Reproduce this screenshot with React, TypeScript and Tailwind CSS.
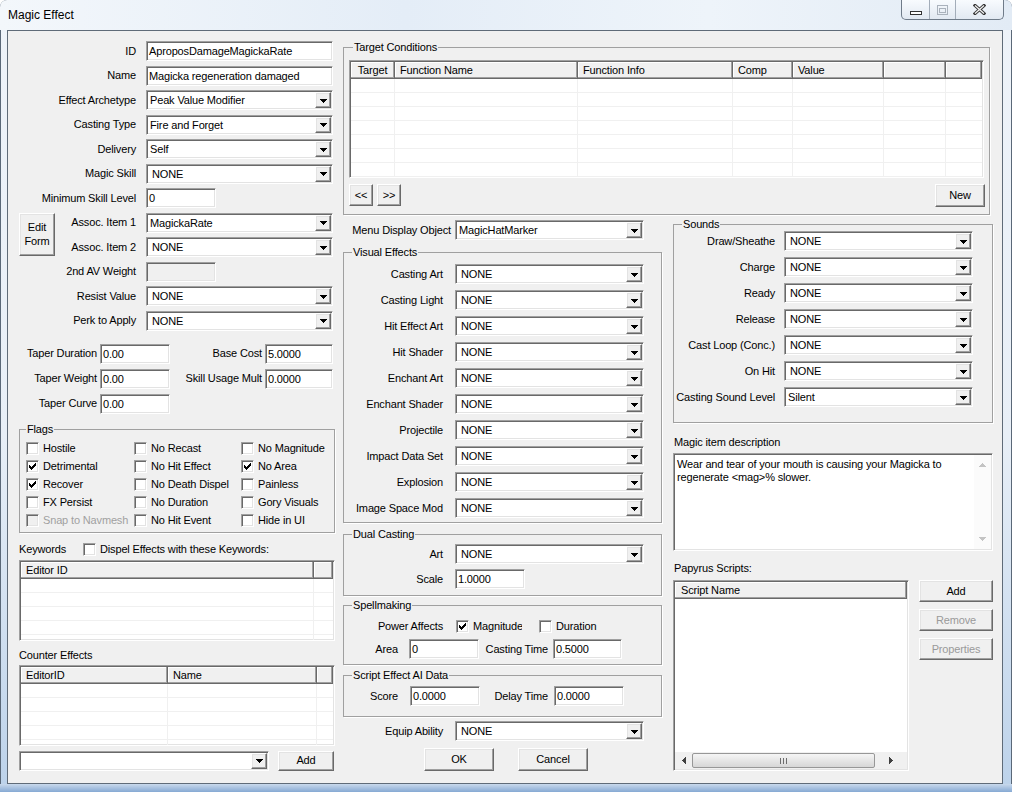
import React from "react";

const sunken =
  "border border-t-[#a0a0a0] border-l-[#a0a0a0] border-r-white border-b-white shadow-[inset_1px_1px_0_#696969,inset_-1px_-1px_0_#e3e3e3]";
const raised =
  "border border-t-white border-l-white border-r-[#696969] border-b-[#696969] shadow-[inset_-1px_-1px_0_#a0a0a0,inset_1px_1px_0_#e3e3e3]";

const Arrow = ({ color = "#000" }: { color?: string }) => (
  <svg width="7" height="4" viewBox="0 0 7 4" shapeRendering="crispEdges">
    <path d="M0 0h7v1H0zM1 1h5v1H1zM2 2h3v1H2zM3 3h1v1H3z" fill={color} />
  </svg>
);

const Combo = ({ className = "", value = "NONE" }: { className?: string; value?: string }) => (
  <div className={`${sunken} h-[20px] bg-white flex items-center shrink-0 ${className}`}>
    <span className={`flex-1 truncate leading-[16px] ${value === "NONE" ? "pl-[5px]" : "pl-[3px]"}`}>{value}</span>
    <div className={`${raised} bg-[#f0f0f0] w-[16px] h-[16px] mr-[1px] flex items-center justify-center pt-[1px]`}>
      <Arrow />
    </div>
  </div>
);

const Edit = ({ className = "", value = "", disabled = false }: { className?: string; value?: string; disabled?: boolean }) => (
  <div
    className={`${sunken} h-[20px] ${disabled ? "bg-[#f0f0f0]" : "bg-white"} pl-[2px] leading-[18px] truncate shrink-0 ${className}`}
  >
    {value}
  </div>
);

const Btn = ({ className = "", children, disabled = false }: { className?: string; children: React.ReactNode; disabled?: boolean }) => (
  <div
    className={`${raised} bg-[#f0f0f0] flex items-center justify-center text-center shrink-0 ${disabled ? "text-[#9a9a9a]" : ""} ${className}`}
  >
    {children}
  </div>
);

const Check = ({ label, checked = false, disabled = false, className = "" }: { label: string; checked?: boolean; disabled?: boolean; className?: string }) => (
  <div className={`flex items-center shrink-0 ${className}`}>
    <div className={`${sunken} w-[13px] h-[13px] ${disabled ? "bg-[#f0f0f0]" : "bg-white"} flex items-center justify-center shrink-0`}>
      {checked && (
        <svg width="7" height="7" viewBox="0 0 7 7" shapeRendering="crispEdges">
          <path
            d="M6 0h1v1H6zM5 1h2v1H5zM0 2h1v1H0zM4 2h3v1H4zM0 3h2v1H0zM3 3h3v1H3zM0 4h5v1H0zM1 5h3v1H1zM2 6h1v1H2z"
            fill="#000"
          />
        </svg>
      )}
    </div>
    <span className={`ml-[4px] whitespace-nowrap ${disabled ? "text-[#a0a0a0]" : ""}`}>{label}</span>
  </div>
);

const Group = ({ title, className = "", legend = "ml-[8px]", children }: { title: string; className?: string; legend?: string; children: React.ReactNode }) => (
  <fieldset className={`border border-[#a0a0a0] shadow-[1px_1px_0_#fff] min-w-0 shrink-0 ${className}`}>
    <legend className={`${legend} px-[1px] leading-[13px]`}>{title}</legend>
    {children}
  </fieldset>
);

const Row = ({ label, lw, children, className = "" }: { label: string; lw: string; children: React.ReactNode; className?: string }) => (
  <div className={`flex items-center h-[20px] shrink-0 ${className}`}>
    <span className={`${lw} text-right whitespace-nowrap shrink-0`}>{label}</span>
    {children}
  </div>
);

const HeaderCell = ({ label, className = "", center = false }: { label: string; className?: string; center?: boolean }) => (
  <div
    className={`h-[17px] shrink-0 border-r border-b border-r-[#696969] border-b-[#696969] shadow-[inset_-1px_-1px_0_#a0a0a0,inset_1px_1px_0_#fff] leading-[16px] truncate ${center ? "text-center" : "pl-[5px]"} ${className}`}
  >
    {label}
  </div>
);

type Col = { label: string; w: string; center?: boolean };

const ListView = ({ className, cols, rows }: { className: string; cols: Col[]; rows: number }) => (
  <div className={`${sunken} bg-white p-[1px] overflow-hidden flex flex-col shrink-0 ${className}`}>
    <div className="flex bg-[#f0f0f0] shrink-0">
      {cols.map((c, i) => (
        <HeaderCell key={i} label={c.label} className={c.w} center={c.center} />
      ))}
      <HeaderCell label="" className="flex-1" />
    </div>
    {Array.from({ length: rows }, (_, r) => (
      <div key={r} className="flex h-[14px] shrink-0 border-b border-[#f0f0f0]">
        {cols.map((c, i) => (
          <div key={i} className={`${c.w} shrink-0 border-r border-[#f0f0f0]`} />
        ))}
        <div className="flex-1" />
      </div>
    ))}
  </div>
);

const CaptionButtons = () => (
  <div className="mr-[8px] flex h-[20px] rounded-b-[5px] border border-t-0 border-[#6f7b89] bg-[linear-gradient(180deg,#f8fbfe,#e2e9f2)] overflow-hidden">
    <div className="w-[28px] flex items-start justify-center pt-[11px] border-r border-[#a3adb9]">
      <svg width="12" height="4" viewBox="0 0 12 4">
        <rect x="0.5" y="0.5" width="11" height="3" fill="#fff" stroke="#333" />
      </svg>
    </div>
    <div className="w-[26px] flex items-center justify-center border-r border-[#a3adb9]">
      <svg width="11" height="10" viewBox="0 0 11 10">
        <rect x="0.5" y="0.5" width="10" height="9" fill="none" stroke="#aab2bc" />
        <rect x="2.5" y="3.5" width="6" height="4" fill="none" stroke="#aab2bc" />
      </svg>
    </div>
    <div className="w-[47px] flex items-center justify-center">
      <svg width="13" height="11" viewBox="0 0 13 11">
        <path d="M2 1.5l9 8M11 1.5l-9 8" stroke="#3a3a3a" strokeWidth="3.2" strokeLinecap="square" />
        <path d="M2 1.5l9 8M11 1.5l-9 8" stroke="#f4f4f4" strokeWidth="1.2" />
      </svg>
    </div>
  </div>
);

const LeftColumn = () => (
  <div className="ml-[11px] mt-[10px] w-[316px] flex flex-col shrink-0">
    <div className="flex flex-col gap-[4.5px]">
      <Row label="ID" lw="w-[117px] mr-[10px]">
        <Edit className="w-[187px]" value="AproposDamageMagickaRate" />
      </Row>
      <Row label="Name" lw="w-[117px] mr-[10px]">
        <Edit className="w-[187px]" value="Magicka regeneration damaged" />
      </Row>
      <Row label="Effect Archetype" lw="w-[117px] mr-[10px]">
        <Combo className="w-[187px]" value="Peak Value Modifier" />
      </Row>
      <Row label="Casting Type" lw="w-[117px] mr-[10px]">
        <Combo className="w-[187px]" value="Fire and Forget" />
      </Row>
      <Row label="Delivery" lw="w-[117px] mr-[10px]">
        <Combo className="w-[187px]" value="Self" />
      </Row>
      <Row label="Magic Skill" lw="w-[117px] mr-[10px]">
        <Combo className="w-[187px]" />
      </Row>
      <Row label="Minimum Skill Level" lw="w-[117px] mr-[10px]">
        <Edit className="w-[70px]" value="0" />
      </Row>
      <div className="flex">
        <Btn className="w-[36px] h-[43px] leading-[14px]">
          Edit
          <br />
          Form
        </Btn>
        <div className="flex flex-col gap-[4.5px]">
          <Row label="Assoc. Item 1" lw="w-[81px] mr-[10px]">
            <Combo className="w-[187px]" value="MagickaRate" />
          </Row>
          <Row label="Assoc. Item 2" lw="w-[81px] mr-[10px]">
            <Combo className="w-[187px]" />
          </Row>
        </div>
      </div>
      <Row label="2nd AV Weight" lw="w-[117px] mr-[10px]">
        <Edit className="w-[70px]" disabled />
      </Row>
      <Row label="Resist Value" lw="w-[117px] mr-[10px]">
        <Combo className="w-[187px]" />
      </Row>
      <Row label="Perk to Apply" lw="w-[117px] mr-[10px]">
        <Combo className="w-[187px]" />
      </Row>
    </div>

    <div className="mt-[13px] flex flex-col gap-[5px]">
      <div className="flex items-center h-[20px]">
        <span className="w-[78px] text-right mr-[3px] whitespace-nowrap">Taper Duration</span>
        <Edit className="w-[70px]" value="0.00" />
        <span className="w-[92px] text-right mr-[3px] whitespace-nowrap">Base Cost</span>
        <Edit className="w-[68px]" value="5.0000" />
      </div>
      <div className="flex items-center h-[20px]">
        <span className="w-[78px] text-right mr-[3px] whitespace-nowrap">Taper Weight</span>
        <Edit className="w-[70px]" value="0.00" />
        <span className="w-[92px] text-right mr-[3px] whitespace-nowrap">Skill Usage Mult</span>
        <Edit className="w-[68px]" value="0.0000" />
      </div>
      <div className="flex items-center h-[20px]">
        <span className="w-[78px] text-right mr-[3px] whitespace-nowrap">Taper Curve</span>
        <Edit className="w-[70px]" value="0.00" />
      </div>
    </div>

    <Group title="Flags" className="mt-[9px] h-[110px] pl-[6px] pt-[4px]" legend="ml-0">
      <div className="grid grid-cols-[108px_107px_1fr] auto-rows-[18px] items-center">
        <Check label="Hostile" />
        <Check label="No Recast" />
        <Check label="No Magnitude" className="w-[84px] overflow-hidden" />
        <Check label="Detrimental" checked />
        <Check label="No Hit Effect" />
        <Check label="No Area" checked />
        <Check label="Recover" checked />
        <Check label="No Death Dispel" />
        <Check label="Painless" />
        <Check label="FX Persist" />
        <Check label="No Duration" />
        <Check label="Gory Visuals" />
        <Check label="Snap to Navmesh" disabled />
        <Check label="No Hit Event" />
        <Check label="Hide in UI" />
      </div>
    </Group>

    <div className="mt-[10px] flex items-center h-[14px]">
      <span className="w-[64px] shrink-0">Keywords</span>
      <Check label="Dispel Effects with these Keywords:" />
    </div>
    <ListView className="mt-[3px] w-[316px] h-[81px]" cols={[{ label: "Editor ID", w: "w-[293px]" }]} rows={5} />

    <div className="mt-[8px] h-[14px]">Counter Effects</div>
    <ListView
      className="mt-[2px] w-[316px] h-[81px]"
      cols={[
        { label: "EditorID", w: "w-[147px]" },
        { label: "Name", w: "w-[149px]" },
      ]}
      rows={5}
    />
    <div className="mt-[5px] flex items-center">
      <Combo className="w-[250px]" value="" />
      <Btn className="ml-[9px] w-[56px] h-[20px]">Add</Btn>
    </div>
  </div>
);

const MiddleColumn = () => (
  <div className="w-[319px] flex flex-col shrink-0">
    <div className="mt-[5px] flex items-center h-[20px]">
      <span className="w-[108px] text-right mr-[4px] whitespace-nowrap">Menu Display Object</span>
      <Combo className="w-[189px]" value="MagicHatMarker" />
    </div>

    <Group title="Visual Effects" className="mt-[6px] h-[277px] pt-[5px]">
      <div className="flex flex-col gap-[6px]">
        {[
          "Casting Art",
          "Casting Light",
          "Hit Effect Art",
          "Hit Shader",
          "Enchant Art",
          "Enchant Shader",
          "Projectile",
          "Impact Data Set",
          "Explosion",
          "Image Space Mod",
        ].map((l) => (
          <Row key={l} label={l} lw="w-[99px] mr-[12px]">
            <Combo className="w-[189px]" />
          </Row>
        ))}
      </div>
    </Group>

    <Group title="Dual Casting" className="mt-[5px] h-[68px] pt-[3px]">
      <div className="flex flex-col gap-[5px]">
        <Row label="Art" lw="w-[99px] mr-[12px]">
          <Combo className="w-[189px]" />
        </Row>
        <Row label="Scale" lw="w-[99px] mr-[12px]">
          <Edit className="w-[70px]" value="1.0000" />
        </Row>
      </div>
    </Group>

    <Group title="Spellmaking" className="mt-[3px] h-[66px] pt-[7px]">
      <div className="flex items-center h-[14px]">
        <span className="w-[99px] text-right mr-[13px] whitespace-nowrap">Power Affects</span>
        <Check label="Magnitude" checked className="w-[66px] overflow-hidden mr-[17px]" />
        <Check label="Duration" />
      </div>
      <div className="flex items-center h-[20px] mt-[6px]">
        <span className="w-[54px] text-right mr-[11px]">Area</span>
        <Edit className="w-[70px]" value="0" />
        <span className="w-[69px] text-right mr-[5px] whitespace-nowrap">Casting Time</span>
        <Edit className="w-[69px]" value="0.5000" />
      </div>
    </Group>

    <Group title="Script Effect AI Data" className="mt-[4px] h-[48px] pt-[4px]">
      <div className="flex items-center h-[20px]">
        <span className="w-[54px] text-right mr-[12px]">Score</span>
        <Edit className="w-[70px]" value="0.0000" />
        <span className="w-[68px] text-right mr-[6px] whitespace-nowrap">Delay Time</span>
        <Edit className="w-[70px]" value="0.0000" />
      </div>
    </Group>

    <Row label="Equip Ability" lw="w-[100px] mr-[12px]" className="mt-[4px]">
      <Combo className="w-[189px]" />
    </Row>

    <div className="mt-[7px] flex">
      <Btn className="ml-[81px] w-[70px] h-[23px]">OK</Btn>
      <Btn className="ml-[24px] w-[70px] h-[23px]">Cancel</Btn>
    </div>
  </div>
);

const RightColumn = () => (
  <div className="ml-[11px] w-[320px] flex flex-col shrink-0">
    <Group title="Sounds" className="mt-[3px] h-[205px]">
      <div className="flex flex-col gap-[6px]">
        {["Draw/Sheathe", "Charge", "Ready", "Release", "Cast Loop (Conc.)", "On Hit"].map((l) => (
          <Row key={l} label={l} lw="w-[101px] mr-[9px]">
            <Combo className="w-[189px]" />
          </Row>
        ))}
        <Row label="Casting Sound Level" lw="w-[101px] mr-[9px]">
          <Combo className="w-[189px]" value="Silent" />
        </Row>
      </div>
    </Group>

    <div className="mt-[13px] h-[14px] pl-[1px]">Magic item description</div>
    <div className={`${sunken} mt-[3px] h-[98px] w-[320px] bg-white flex p-[1px]`}>
      <div className="flex-1 pl-[2px] pt-[3px] leading-[13px]">
        Wear and tear of your mouth is causing your Magicka to
        <br />
        regenerate {"<mag>"}% slower.
      </div>
      <div className="w-[17px] bg-[#fbfbfb] flex flex-col items-center justify-between py-[8px]">
        <svg width="7" height="4" viewBox="0 0 7 4" shapeRendering="crispEdges">
          <path d="M3 0h1v1H3zM2 1h3v1H2zM1 2h5v1H1zM0 3h7v1H0z" fill="#c4c4c4" />
        </svg>
        <Arrow color="#c4c4c4" />
      </div>
    </div>

    <div className="mt-[11px] h-[14px] pl-[1px]">Papyrus Scripts:</div>
    <div className="mt-[4px] flex">
      <div className={`${sunken} w-[236px] h-[191px] bg-white p-[1px] flex flex-col shrink-0`}>
        <HeaderCell label="Script Name" className="bg-[#f0f0f0] pl-[6px]" />
        <div className="flex-1" />
        <div className="h-[17px] bg-[#f0f0f0] flex items-center shrink-0">
          <div className="w-[17px] flex items-center justify-center">
            <svg width="4" height="7" viewBox="0 0 4 7" shapeRendering="crispEdges">
              <path d="M3 0h1v7H3zM2 1h1v5H2zM1 2h1v3H1zM0 3h1v1H0z" fill="#404040" />
            </svg>
          </div>
          <div className="w-[183px] h-[15px] rounded-[2px] border border-[#979797] bg-[linear-gradient(180deg,#f5f5f5,#e6e6e6_50%,#d6d6d6)] flex items-center justify-center gap-[1px]">
            <div className="w-[1px] h-[6px] bg-[#6d6d6d]" />
            <div className="w-[1px] h-[6px] bg-[#6d6d6d] ml-[1px]" />
            <div className="w-[1px] h-[6px] bg-[#6d6d6d] ml-[1px]" />
          </div>
          <div className="flex-1 flex items-center justify-center">
            <svg width="4" height="7" viewBox="0 0 4 7" shapeRendering="crispEdges">
              <path d="M0 0h1v7H0zM1 1h1v5H1zM2 2h1v3H2zM3 3h1v1H3z" fill="#404040" />
            </svg>
          </div>
        </div>
      </div>
      <div className="ml-[10px] w-[74px] flex flex-col gap-[7px]">
        <Btn className="w-[74px] h-[22px]">Add</Btn>
        <Btn className="w-[74px] h-[22px]" disabled>
          Remove
        </Btn>
        <Btn className="w-[74px] h-[22px]" disabled>
          Properties
        </Btn>
      </div>
    </div>
  </div>
);

const TargetConditions = () => (
  <Group title="Target Conditions" className="w-[647px] h-[174px] pl-[5px] pt-[6px]" legend="ml-[4px]">
    <ListView
      className="w-[635px] h-[118px]"
      cols={[
        { label: "Target", w: "w-[44px]", center: true },
        { label: "Function Name", w: "w-[183px]" },
        { label: "Function Info", w: "w-[155px]" },
        { label: "Comp", w: "w-[60px]" },
        { label: "Value", w: "w-[91px]" },
        { label: "", w: "w-[62px]" },
      ]}
      rows={7}
    />
    <div className="mt-[6px] flex w-[636px]">
      <Btn className="w-[24px] h-[22px]">&lt;&lt;</Btn>
      <Btn className="ml-[4px] w-[24px] h-[22px]">&gt;&gt;</Btn>
      <Btn className="ml-auto w-[50px] h-[23px]">New</Btn>
    </div>
  </Group>
);

export default function App() {
  return (
    <div className="w-[1012px] h-[792px] overflow-hidden rounded-t-[7px] shadow-[inset_0_0_0_1px_#5a6878] bg-[linear-gradient(180deg,#eef3f9_0%,#e8eff7_55%,#bcd2ea_100%)] text-[11px] leading-[13px] tracking-[-0.15px] text-black font-['Liberation_Sans',Arial,sans-serif] flex flex-col">
      <div className="h-[30px] flex items-start justify-between shrink-0 bg-[linear-gradient(90deg,#f3f7fb,#e4edf7_40%,#eef4fa_70%,#e2ebf5)]">
        <div className="mt-[8px] ml-[8px] text-[12px] leading-[15px] tracking-normal">Magic Effect</div>
        <CaptionButtons />
      </div>
      <div className="ml-[7px] mr-[9px] h-[754px] border border-[#5f6b78] bg-[#f0f0f0] flex shrink-0">
        <LeftColumn />
        <div className="ml-[8px] mt-[10px] w-[650px] flex flex-col shrink-0">
          <TargetConditions />
          <div className="flex">
            <MiddleColumn />
            <RightColumn />
          </div>
        </div>
      </div>
      <div className="flex-1 bg-[linear-gradient(180deg,#c9d9ec,#86a9d3)]" />
    </div>
  );
}
